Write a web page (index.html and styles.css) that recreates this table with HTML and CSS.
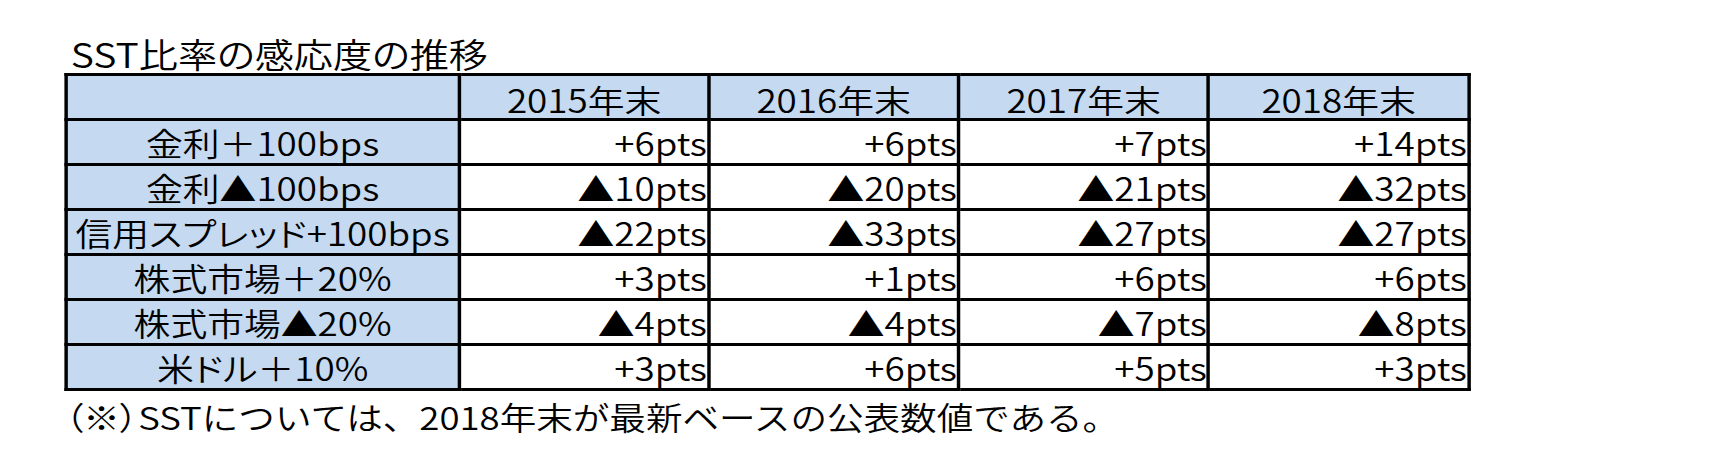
FILE: index.html
```html
<!DOCTYPE html>
<html lang="ja">
<head>
<meta charset="utf-8">
<title>SST比率の感応度の推移</title>
<link rel="stylesheet" href="styles.css">
</head>
<body>
<div class="sheet">
  <div class="title">SST比率の感応度の推移</div>
  <table class="grid">
    <colgroup>
      <col class="c-label">
      <col class="c-y1">
      <col class="c-y2">
      <col class="c-y3">
      <col class="c-y4">
    </colgroup>
    <thead>
      <tr>
        <th class="head corner"></th>
        <th class="head">2015年末</th>
        <th class="head">2016年末</th>
        <th class="head">2017年末</th>
        <th class="head">2018年末</th>
      </tr>
    </thead>
    <tbody>
      <tr>
        <th class="label">金利＋100bps</th>
        <td class="val">+6pts</td>
        <td class="val">+6pts</td>
        <td class="val">+7pts</td>
        <td class="val">+14pts</td>
      </tr>
      <tr>
        <th class="label">金利▲100bps</th>
        <td class="val">▲10pts</td>
        <td class="val">▲20pts</td>
        <td class="val">▲21pts</td>
        <td class="val">▲32pts</td>
      </tr>
      <tr>
        <th class="label">信用スプレッド+100bps</th>
        <td class="val">▲22pts</td>
        <td class="val">▲33pts</td>
        <td class="val">▲27pts</td>
        <td class="val">▲27pts</td>
      </tr>
      <tr>
        <th class="label">株式市場＋20%</th>
        <td class="val">+3pts</td>
        <td class="val">+1pts</td>
        <td class="val">+6pts</td>
        <td class="val">+6pts</td>
      </tr>
      <tr>
        <th class="label">株式市場▲20%</th>
        <td class="val">▲4pts</td>
        <td class="val">▲4pts</td>
        <td class="val">▲7pts</td>
        <td class="val">▲8pts</td>
      </tr>
      <tr>
        <th class="label">米ドル＋10%</th>
        <td class="val">+3pts</td>
        <td class="val">+6pts</td>
        <td class="val">+5pts</td>
        <td class="val">+3pts</td>
      </tr>
    </tbody>
  </table>
  <p class="note"><span class="mark">（※）</span>SSTについては、2018年末が最新ベースの公表数値である。</p>
</div>
</body>
</html>
```

FILE: styles.css
```css
html, body {
  margin: 0;
  padding: 0;
  background: #ffffff;
}

body {
  width: 1728px;
  height: 469px;
  overflow: hidden;
  font-family: "Noto Sans CJK JP", "Noto Sans", sans-serif;
  font-weight: 350;
  font-feature-settings: "palt" 1;
  color: #000000;
}

.sheet {
  transform: scaleX(1.15);
  transform-origin: 0 0;
  padding-left: 55.6px;
  width: 1400px;
}

.title {
  padding: 35px 0 0 6px;
  height: 38px;
  line-height: 38px;
  font-size: 34px;
  white-space: nowrap;
}

.grid {
  border-collapse: collapse;
  table-layout: fixed;
  width: 1220px;
  border: 3px solid #000;
}

.c-label { width: 342.6px; }
.c-y1 { width: 216.5px; }
.c-y2 { width: 217.4px; }
.c-y3 { width: 217.4px; }
.c-y4 { width: 226.1px; }

.grid th,
.grid td {
  border: 3px solid #000;
  height: 42px;
  padding: 0;
  white-space: nowrap;
  font-weight: 350;
  line-height: 38px;
}

.head {
  background: #c5d9f1;
  font-size: 32px;
  text-align: center;
  vertical-align: bottom;
}

.label {
  background: #c5d9f1;
  font-size: 32px;
  text-align: center;
  vertical-align: middle;
}

.val {
  background: #ffffff;
  font-size: 32px;
  text-align: right;
  padding-right: 5px;
  vertical-align: middle;
}

.note {
  margin: 7px 0 0;
  padding-left: 1px;
  line-height: 36px;
  font-size: 31.8px;
  font-feature-settings: "palt" 0;
  white-space: nowrap;
}

.mark {
  font-feature-settings: "palt" 1;
}
```
